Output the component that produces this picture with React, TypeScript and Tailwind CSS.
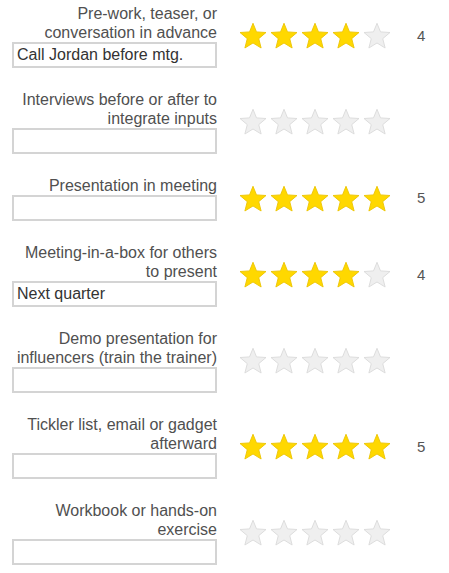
import React from 'react';

interface Item {
  label: string[];
  note: string;
  rating: number;
}

const items: Item[] = [
  { label: ['Pre-work, teaser, or', 'conversation in advance'], note: 'Call Jordan before mtg.', rating: 4 },
  { label: ['Interviews before or after to', 'integrate inputs'], note: '', rating: 0 },
  { label: ['Presentation in meeting'], note: '', rating: 5 },
  { label: ['Meeting-in-a-box for others', 'to present'], note: 'Next quarter', rating: 4 },
  { label: ['Demo presentation for', 'influencers (train the trainer)'], note: '', rating: 0 },
  { label: ['Tickler list, email or gadget', 'afterward'], note: '', rating: 5 },
  { label: ['Workbook or hands-on', 'exercise'], note: '', rating: 0 },
];

function Star({ on }: { on: boolean }) {
  return (
    <svg width="30" height="30" viewBox="0 0 24 24" className="block">
      <polygon
        points="12,1.8 14.8,8.7 22.4,9.2 16.6,14.1 18.5,21.6 12,17.6 5.5,21.6 7.4,14.1 1.6,9.2 9.2,8.7"
        fill={on ? '#ffd800' : '#efefef'}
        stroke={on ? '#ecc400' : '#d9d9d9'}
        strokeWidth="0.7"
        strokeLinejoin="round"
      />
    </svg>
  );
}

function Row({ item }: { item: Item }) {
  return (
    <div className="flex items-center">
      <div className="w-[205px] ml-[12px] flex flex-col">
        <div className="text-right text-[16px] leading-[19px] text-[#505050]">
          {item.label.map((l) => (
            <div key={l}>{l}</div>
          ))}
        </div>
        <div className="h-[26px] border-2 border-[#d4d4d4] bg-white px-[3px] text-[16px] leading-[22px] text-[#333]">
          {item.note}
        </div>
      </div>
      <div className="ml-[21px] flex gap-[1px]">
        {[1, 2, 3, 4, 5].map((i) => (
          <Star key={i} on={i <= item.rating} />
        ))}
      </div>
      <div className="ml-[25px] text-[15px] text-[#555]">{item.rating > 0 ? item.rating : ''}</div>
    </div>
  );
}

export default function App() {
  return (
    <div
      className="w-[449px] h-[573px] bg-white pt-[4px] flex flex-col gap-[22px] overflow-hidden"
      style={{ fontFamily: '"Liberation Sans", Arial, sans-serif' }}
    >
      {items.map((it) => (
        <Row key={it.label[0]} item={it} />
      ))}
    </div>
  );
}
